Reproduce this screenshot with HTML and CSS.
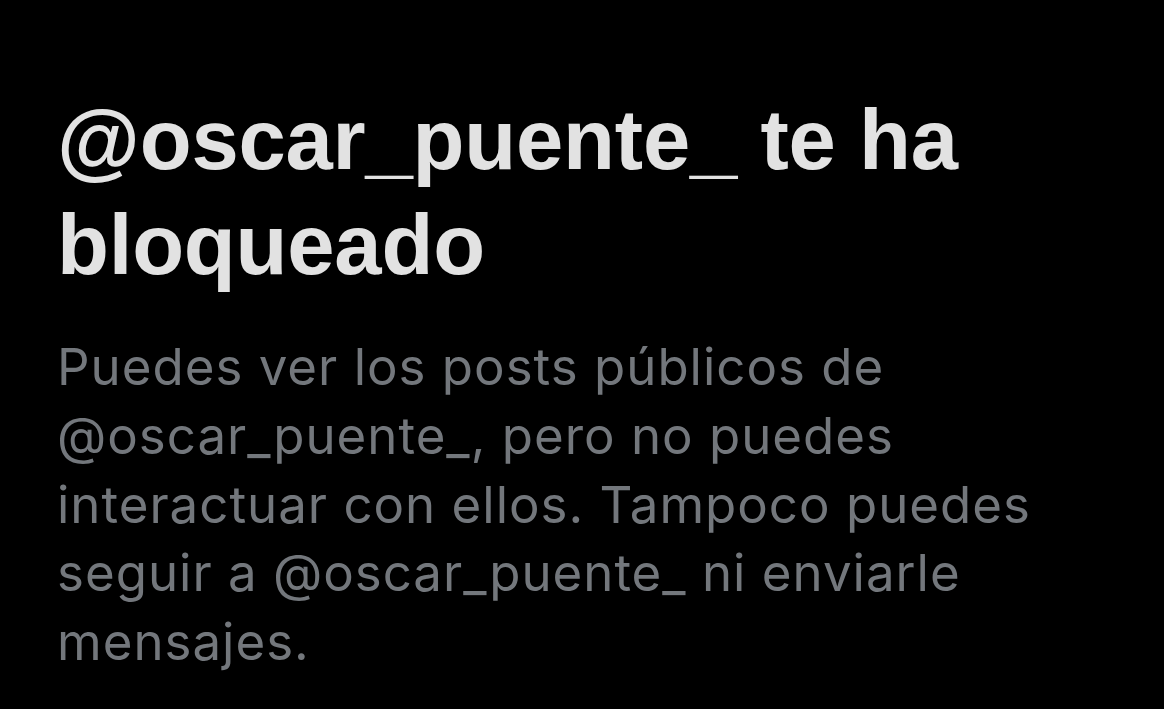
FILE: index.html
```html
<!DOCTYPE html>
<html lang="es">
<head>
<meta charset="utf-8">
<link rel="stylesheet" href="styles.css">
</head>
<body>
<main class="notice">
  <h1 class="title">@oscar_puente_ te ha bloqueado</h1>
  <p class="desc">Puedes ver los posts públicos de @oscar_puente_, pero no puedes interactuar con ellos. Tampoco puedes seguir a @oscar_puente_ ni enviarle mensajes.</p>
</main>
</body>
</html>
```
FILE: styles.css
```css
html, body {
  margin: 0;
  padding: 0;
  background: #000;
  height: 100%;
  overflow: hidden;
}
.notice {
  padding: 87px 0 0 57px;
  width: 1040px;
}
.title {
  margin: 0;
  font-family: "Liberation Sans", Arial, sans-serif;
  font-weight: 700;
  font-size: 85px;
  line-height: 105px;
  color: #e2e2e2;
  letter-spacing: -0.2px;
}
.desc {
  margin: 36px 0 0 0;
  font-family: Inter, "Liberation Sans", sans-serif;
  font-weight: 400;
  font-size: 51px;
  line-height: 68.75px;
  letter-spacing: 1px;
  color: #73777c;
  width: 1040px;
}
```
